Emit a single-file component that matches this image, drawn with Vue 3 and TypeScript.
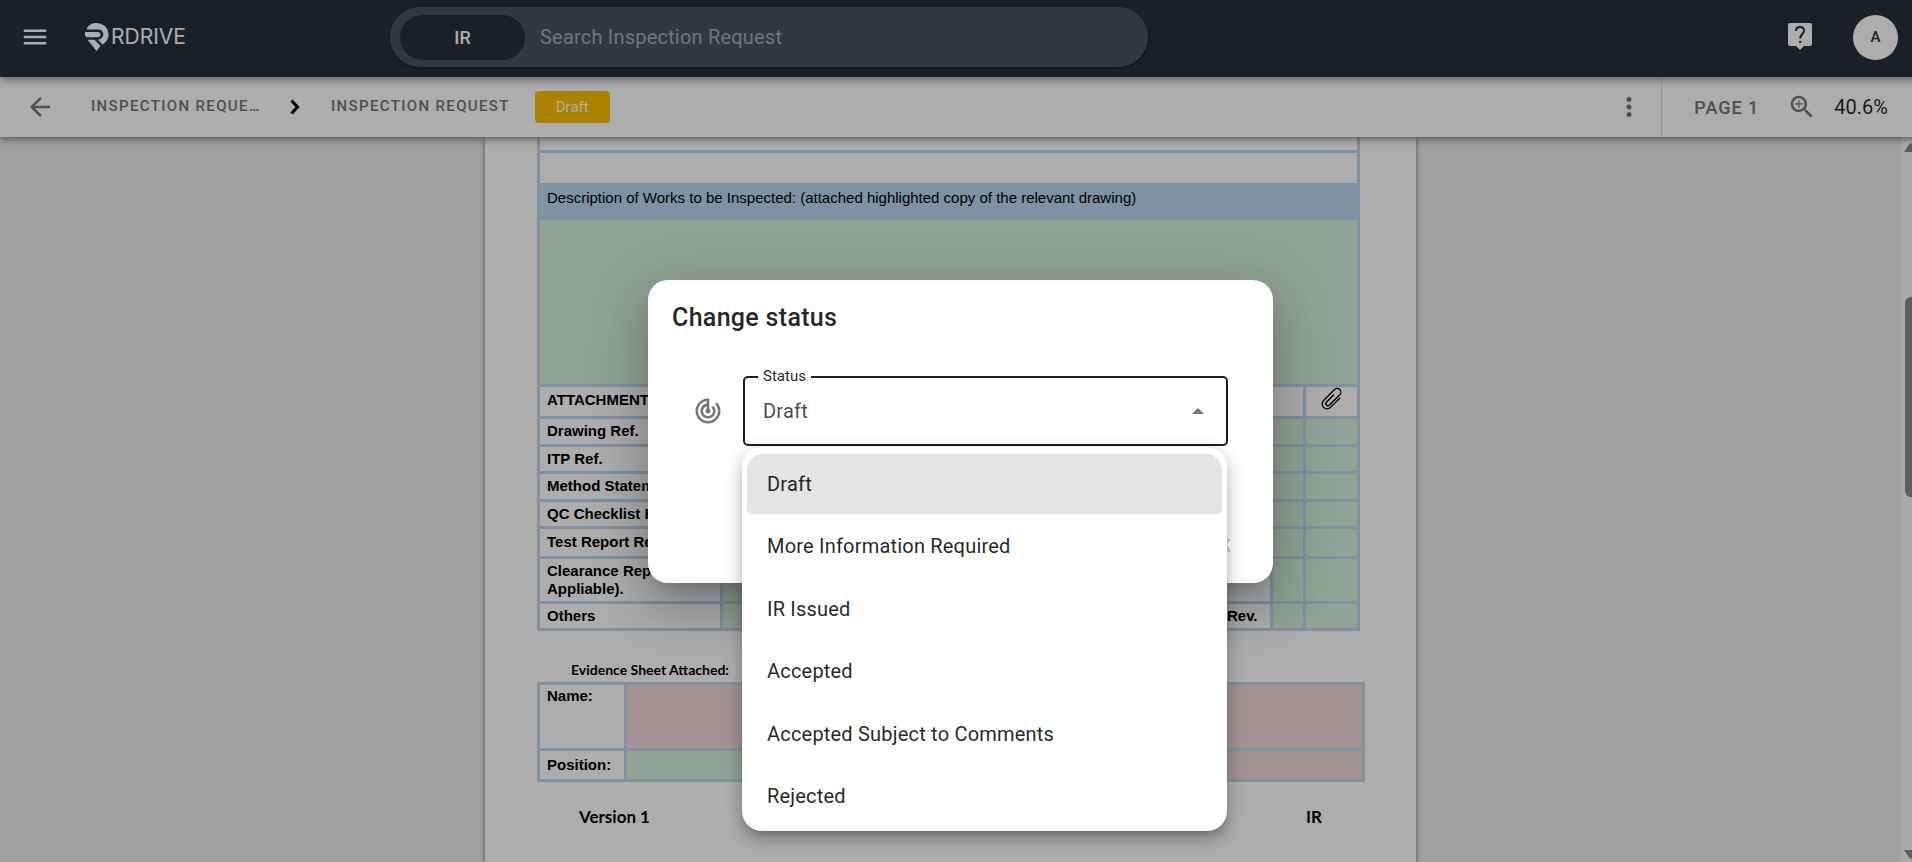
<script setup lang="ts">
import { ref } from 'vue'

const statuses: string[] = [
  'Draft',
  'More Information Required',
  'IR Issued',
  'Accepted',
  'Accepted Subject to Comments',
  'Rejected',
]
const selected = ref<string>('Draft')
const query = ref<string>('')

interface AttachmentRow {
  label: string
  size: string
  rev?: string
}

const attachments: AttachmentRow[] = [
  { label: 'Drawing Ref.', size: 'r28' },
  { label: 'ITP Ref.', size: 'r27' },
  { label: 'Method Statement Ref.', size: 'r28' },
  { label: 'QC Checklist Ref.', size: 'r27' },
  { label: 'Test Report Ref.', size: 'r30' },
  { label: 'Clearance Report (If Appliable).', size: 'r45' },
  { label: 'Others', size: 'r27', rev: 'Rev.' },
]
</script>

<template>
  <div class="frame">
    <div class="app">
      <header class="topbar">
        <div class="brand-area">
          <button class="icon-btn" aria-label="Menu">
            <svg viewBox="0 0 24 24" width="30" height="30"><path fill="#fff" d="M3 18h18v-2H3v2zm0-5h18v-2H3v2zm0-7v2h18V6H3z" /></svg>
          </button>
          <a class="brand" href="#">
            <svg viewBox="0 0 24 28" width="24" height="28" aria-hidden="true">
              <path fill="#fff" d="M1.500 6.500C3 2.500 6.500 0 11 0 18.500 0 23.500 5 23.500 11.500 23.500 16 21 19.500 17.500 21.500L13 16.800C16.500 16 18.300 14 18.300 11.300 18.300 8.300 16 6.500 12.800 6.500Z" />
              <path fill="#fff" d="M0 9H12.500C14.600 9 15.600 10 15.600 11.600S14.600 14.200 12.500 14.200H1.500L0 12.200Z" />
              <path fill="#fff" d="M2.500 16.800H9.500L15.500 23 11.500 28Z" />
            </svg>
            <span>RDRIVE</span>
          </a>
        </div>
        <form class="search" role="search" @submit.prevent>
          <button class="scope" type="button">IR</button>
          <input v-model="query" type="search" aria-label="Search" placeholder="Search Inspection Request" />
        </form>
        <div class="account">
          <button class="icon-btn" aria-label="Help">
            <svg viewBox="0 0 24 28" width="24" height="28">
              <path fill="#fff" d="M2 0H22Q24 0 24 2V21Q24 23 22 23H16L12 27 8 23H2Q0 23 0 21V2Q0 0 2 0Z" />
              <path fill="none" stroke="#263238" stroke-width="2" d="M8 8C8 5.200 9.700 4 12 4S16 5.400 16 7.800C16 11 12.200 11.200 12.200 15.500" />
              <path fill="#263238" d="M11.100 17.800H13.300V20H11.100Z" />
            </svg>
          </button>
          <button class="avatar" aria-label="Account">A</button>
        </div>
      </header>

      <nav class="toolbar" aria-label="Breadcrumb">
        <button class="icon-btn" aria-label="Back">
          <svg viewBox="0 0 24 24" width="30" height="30"><path fill="#757575" d="M20 11H7.830l5.590-5.590L12 4l-8 8 8 8 1.410-1.410L7.830 13H20v-2z" /></svg>
        </button>
        <a class="crumb first" href="#">INSPECTION REQUE…</a>
        <svg class="chevron" viewBox="0 0 10 16" width="10" height="16" aria-hidden="true"><path fill="none" stroke="#000" stroke-width="3" d="M1.500 1.500 7.500 8 1.500 14.500" /></svg>
        <a class="crumb" href="#">INSPECTION REQUEST</a>
        <span class="badge">Draft</span>
        <div class="tools">
          <button class="icon-btn more" aria-label="More">
            <svg viewBox="0 0 24 24" width="30" height="30"><path fill="#757575" d="M12 8c1.100 0 2-.9 2-2s-.9-2-2-2-2 .9-2 2 .9 2 2 2zm0 2c-1.100 0-2 .9-2 2s.9 2 2 2 2-.9 2-2-.9-2-2-2zm0 6c-1.100 0-2 .9-2 2s.9 2 2 2 2-.9 2-2-.9-2-2-2z" /></svg>
          </button>
          <span class="page-no">PAGE 1</span>
          <button class="icon-btn" aria-label="Zoom in">
            <svg viewBox="0 0 24 24" width="30" height="30"><path fill="#757575" d="M15.500 14h-.79l-.28-.27C15.410 12.590 16 11.110 16 9.500 16 5.910 13.090 3 9.500 3S3 5.910 3 9.500 5.910 16 9.500 16c1.610 0 3.090-.59 4.230-1.570l.27.28v.79l5 4.990L20.490 19l-4.990-5zm-6 0C7.010 14 5 11.990 5 9.500S7.010 5 9.500 5 14 7.010 14 9.500 11.990 14 9.500 14zm3-4h-2.500v2.500H9V10H6.500V9H9V6.500h1V9h2.500v1z" /></svg>
          </button>
          <span class="zoom">40.6%</span>
        </div>
      </nav>

      <main class="viewer">
        <div class="canvas">
          <article class="sheet">
            <table class="form works">
              <colgroup><col class="w183" /><col /><col class="w53" /><col class="w33" /><col class="w54" /></colgroup>
              <tbody>
                <tr class="r14"><td colspan="5"></td></tr>
                <tr class="r33"><td colspan="5"></td></tr>
                <tr class="r34"><td class="blue" colspan="5">Description of Works to be Inspected: (attached highlighted copy of the relevant drawing)</td></tr>
                <tr class="r167"><td class="green" colspan="5"></td></tr>
                <tr class="r32">
                  <th class="head" scope="col">ATTACHMENTS</th>
                  <td></td>
                  <td></td>
                  <td></td>
                  <td class="clip">
                    <svg viewBox="-12 -12 24 24" width="24" height="24" role="img" aria-label="Attachment">
                      <path transform="rotate(45)" fill="none" stroke="#000" stroke-width="1.300" stroke-linecap="round" d="M-1.700 -4V6A2.100 2.100 0 0 0 2.500 6V-8.500A3.700 3.700 0 0 0 -4.900 -8.500V7A4.900 4.900 0 0 0 4.900 7V-6" />
                    </svg>
                  </td>
                </tr>
                <tr v-for="row in attachments" :key="row.label" :class="row.size">
                  <th scope="row">{{ row.label }}</th>
                  <td class="green"></td>
                  <th class="rev">{{ row.rev }}</th>
                  <td class="green"></td>
                  <td class="green"></td>
                </tr>
              </tbody>
            </table>

            <p class="evidence">Evidence Sheet Attached:</p>

            <table class="form people">
              <colgroup><col class="w87" /><col /><col class="w338" /></colgroup>
              <tbody>
                <tr class="r66"><th scope="row">Name:</th><td class="red"></td><td class="red"></td></tr>
                <tr class="r31"><th scope="row">Position:</th><td class="green"></td><td class="red"></td></tr>
              </tbody>
            </table>

            <footer class="sheet-foot"><span>Version 1</span><span>IR</span></footer>
          </article>
        </div>
        <div class="scrollbar" aria-hidden="true">
          <svg viewBox="0 0 14 9" width="14" height="9"><path fill="#8b8b8b" d="M0 9 5 1.500Q7-.5 9 1.500L14 9Z" /></svg>
          <span class="thumb"></span>
          <svg viewBox="0 0 14 9" width="14" height="9"><path fill="#8b8b8b" d="M0 0 5 7.500Q7 9.500 9 7.500L14 0Z" /></svg>
        </div>
      </main>

      <div class="overlay">
        <section class="dialog" role="dialog" aria-modal="true" aria-labelledby="dialog-title">
          <h2 id="dialog-title">Change status</h2>
          <div class="dialog-body">
            <svg viewBox="0 0 24 24" width="30" height="30" aria-hidden="true"><path fill="#757575" d="M19.070 4.930l-1.410 1.410C19.100 7.790 20 9.790 20 12c0 4.420-3.580 8-8 8s-8-3.580-8-8c0-4.080 3.050-7.440 7-7.930v2.020C8.160 6.570 6 9.030 6 12c0 3.310 2.690 6 6 6s6-2.690 6-6c0-1.660-.67-3.160-1.760-4.240l-1.410 1.410C15.550 9.900 16 10.900 16 12c0 2.210-1.790 4-4 4s-4-1.790-4-4c0-1.860 1.280-3.410 3-3.860v2.140c-.6.35-1 .98-1 1.720 0 1.100.9 2 2 2s2-.9 2-2c0-.74-.4-1.380-1-1.720V2h-1C6.480 2 2 6.480 2 12s4.480 10 10 10 10-4.480 10-10c0-2.760-1.120-5.260-2.930-7.070z" /></svg>
            <div class="field">
              <label for="status">Status</label>
              <select id="status" v-model="selected">
                <option v-for="s in statuses" :key="s">{{ s }}</option>
              </select>
              <svg class="caret" viewBox="0 0 12 6" width="12" height="6" aria-hidden="true"><path fill="#757575" d="M0 6 6 0 12 6Z" /></svg>
              <div class="menu">
                <ul role="listbox" aria-label="Status">
                  <li
                    v-for="s in statuses"
                    :key="s"
                    role="option"
                    :aria-selected="s === selected"
                    @click="selected = s"
                  >
                    <span :class="{ active: s === selected }">{{ s }}</span>
                  </li>
                </ul>
              </div>
            </div>
          </div>
          <div class="actions"><button disabled>OK</button></div>
        </section>
      </div>
    </div>
  </div>
</template>

<style>
body {
  margin: 0;
}
</style>

<style scoped>
.frame {
  overflow: hidden;
  font-family: Roboto, "Liberation Sans", sans-serif;
  color: rgba(0, 0, 0, 0.87);
}
/* The right edge of the app, with half of the scrollbar, runs past the window. */
.app {
  position: relative;
  display: flex;
  flex-direction: column;
  width: calc(100% + 9px);
  height: 100vh;
  background: #eee;
}
button {
  font: inherit;
  border: 0;
  background: none;
  padding: 0;
  cursor: pointer;
}
a {
  text-decoration: none;
}
svg {
  display: block;
  flex: none;
}
.icon-btn {
  display: block;
}

.topbar {
  position: relative;
  z-index: 2;
  flex: none;
  display: flex;
  align-items: center;
  height: 77px;
  box-sizing: border-box;
  padding: 0 23px 3px 20px;
  background: #263238;
  box-shadow: 0 3px 5px -1px rgba(0, 0, 0, 0.2), 0 5px 6px 0 rgba(0, 0, 0, 0.14), 0 1px 12px 0 rgba(0, 0, 0, 0.12);
}
.brand-area {
  width: 370px;
  flex: none;
  display: flex;
  align-items: center;
  gap: 35px;
}
.brand {
  display: flex;
  align-items: center;
  gap: 2px;
  color: #fff;
  font-family: Inter, Roboto, sans-serif;
  font-size: 21px;
  line-height: 28px;
}
.search {
  flex: 0 1 758px;
  display: flex;
  align-items: center;
  gap: 15px;
  height: 60px;
  box-sizing: border-box;
  padding: 0 30px 0 10px;
  border-radius: 30px;
  background: #4b5358;
  box-shadow: 0 3px 2px -2px rgba(0, 0, 0, 0.2), 0 2px 2px 0 rgba(0, 0, 0, 0.14), 0 1px 5px 0 rgba(0, 0, 0, 0.12);
}
.scope {
  width: 125px;
  height: 45px;
  border-radius: 23px;
  background: #263238;
  color: #fff;
  font-size: 18px;
  font-weight: 500;
}
.search input {
  flex: 1;
  min-width: 0;
  border: 0;
  padding: 0;
  background: none;
  color: #fff;
  font: inherit;
  font-size: 20px;
  letter-spacing: 0.01em;
  outline: none;
}
.search input::placeholder {
  color: #a9adaf;
  opacity: 1;
}
.account {
  margin-left: auto;
  display: flex;
  align-items: center;
  gap: 41px;
}
.avatar {
  width: 45px;
  height: 45px;
  border-radius: 50%;
  background: #fff;
  color: #263238;
  font-size: 15px;
  font-weight: 500;
}

.toolbar {
  position: relative;
  z-index: 1;
  flex: none;
  display: flex;
  align-items: center;
  height: 60px;
  padding: 0 33px 0 25px;
  background: #fff;
  box-shadow: 0 3px 5px -1px rgba(0, 0, 0, 0.2), 0 5px 6px 0 rgba(0, 0, 0, 0.14), 0 1px 12px 0 rgba(0, 0, 0, 0.12);
}
.crumb {
  padding-bottom: 2px;
  color: #757575;
  font-size: 15px;
  font-weight: 500;
  letter-spacing: 0.09em;
  line-height: 20px;
  white-space: nowrap;
}
.crumb.first {
  width: 170px;
  margin-left: 36px;
}
.chevron {
  margin: 0 31px 0 29px;
}
.badge {
  margin-left: 25px;
  padding: 0 21px;
  border-radius: 4px;
  background: #ffc107;
  color: #fff;
  font-size: 15px;
  line-height: 32px;
}
.tools {
  margin-left: auto;
  display: flex;
  align-items: center;
  height: 60px;
}
.more {
  padding: 15px 17px 15px 0;
  border-right: 1px solid #e0e0e0;
}
.page-no {
  margin: 0 28px 0 32px;
  color: #757575;
  font-size: 18px;
  font-weight: 500;
  letter-spacing: 1px;
}
.zoom {
  margin-left: 17px;
  font-size: 20px;
}

.viewer {
  flex: 1;
  min-height: 0;
  display: flex;
}
.canvas {
  flex: 1;
  min-width: 0;
  overflow: hidden;
  display: flex;
  justify-content: center;
}
.sheet {
  width: 931px;
  flex: none;
  box-sizing: border-box;
  padding: 0 52px;
  min-height: 100%;
  background: #fff;
  box-shadow: 0 1px 5px rgba(0, 0, 0, 0.5);
  color: #000;
}
.form {
  table-layout: fixed;
  border-collapse: collapse;
  font-family: "Liberation Sans", Arial, sans-serif;
  font-size: 15px;
  line-height: 18px;
}
.works {
  width: 823px;
}
.people {
  width: 828px;
}
.form td,
.form th {
  box-sizing: border-box;
  padding: 0 7px;
  border: 3px solid #bdd6ee;
  text-align: left;
  vertical-align: middle;
}
.form tr:first-child td[colspan] {
  border-top: 0;
}
.form .blue {
  background: #bdd6ee;
  vertical-align: top;
  padding-top: 3px;
}
.form .green {
  background: #d6f0da;
}
.form .red {
  background: #f1d8d6;
}
.form .head {
  padding-bottom: 3px;
}
.form .clip {
  padding: 0 14px;
  vertical-align: top;
}
.people th {
  vertical-align: top;
  padding-top: 2px;
}
.people tr + tr th {
  vertical-align: middle;
  padding-top: 0;
}
.form .rev {
  white-space: nowrap;
}
.w183 { width: 183px; }
.w53 { width: 53px; }
.w33 { width: 33px; }
.w54 { width: 54px; }
.w87 { width: 87px; }
.w338 { width: 338px; }
.r14 { height: 14px; }
.r33 { height: 33px; }
.r34 { height: 34px; }
.r167 { height: 167px; }
.r27 { height: 27px; }
.r28 { height: 28px; }
.r30 { height: 30px; }
.r31 { height: 31px; }
.r32 { height: 32px; }
.r45 { height: 45px; }
.r66 { height: 66px; }
.evidence {
  margin: 0;
  padding: 29px 0 2px 34px;
  font-family: Lato, sans-serif;
  font-size: 14px;
  font-weight: 700;
  line-height: 20px;
}
.sheet-foot {
  display: flex;
  justify-content: space-between;
  padding: 25px 42px;
  font-family: Lato, sans-serif;
  font-size: 17px;
  font-weight: 700;
  line-height: 20px;
}
.scrollbar {
  width: 20px;
  flex: none;
  box-sizing: border-box;
  padding: 6px 3px 3px;
  display: flex;
  flex-direction: column;
  background: #fbfbfb;
}
.thumb {
  width: 12px;
  height: 200px;
  margin: 145px 1px auto;
  border-radius: 6px;
  background: #8b8b8b;
}

.overlay {
  position: absolute;
  inset: 0;
  z-index: 3;
  display: flex;
  align-items: center;
  justify-content: center;
  background: rgba(0, 0, 0, 0.32);
}
.dialog {
  width: 625px;
  border-radius: 20px;
  background: #fff;
  box-shadow: 0 14px 19px -9px rgba(0, 0, 0, 0.2), 0 30px 48px 4px rgba(0, 0, 0, 0.14), 0 11px 58px 10px rgba(0, 0, 0, 0.12);
}
.dialog h2 {
  margin: 0;
  padding: 20px 24px 0;
  font-size: 25px;
  font-weight: 500;
  letter-spacing: 0.0125em;
  line-height: 36px;
}
.dialog-body {
  display: flex;
  align-items: center;
  gap: 20px;
  padding: 40px 45px 0;
}
.field {
  position: relative;
  flex: 1;
}
.field label {
  position: absolute;
  top: -9px;
  left: 15px;
  padding: 0 5px;
  background: #fff;
  font-size: 15px;
  line-height: 18px;
}
.field select {
  display: block;
  width: 100%;
  height: 70px;
  box-sizing: border-box;
  padding: 0 18px;
  border: 2px solid #1e1e1e;
  border-radius: 5px;
  appearance: none;
  background: #fff;
  color: rgba(0, 0, 0, 0.72);
  font: inherit;
  font-size: 20px;
  letter-spacing: 0.01em;
  outline: none;
}
.caret {
  position: absolute;
  right: 24px;
  top: 32px;
}
.menu {
  position: absolute;
  top: 71px;
  left: -1px;
  width: 100%;
  box-sizing: border-box;
  padding: 7px 5px 2px;
  border-radius: 20px;
  background: #fff;
  box-shadow: 0 6px 6px -4px rgba(0, 0, 0, 0.2), 0 10px 13px 1px rgba(0, 0, 0, 0.14), 0 4px 18px 3px rgba(0, 0, 0, 0.12);
}
.menu ul {
  display: grid;
  grid-auto-rows: 1fr;
  height: 375px;
  margin: 0;
  padding: 0;
  list-style: none;
  font-size: 20px;
  letter-spacing: 0.01em;
}
.menu li span {
  display: block;
  padding: 0 20px;
  border-radius: 5px;
  line-height: 60px;
  cursor: pointer;
}
.menu li:first-child span {
  border-radius: 16px 16px 5px 5px;
}
.menu .active {
  background: #e4e4e4;
}
.actions {
  display: flex;
  justify-content: flex-end;
  padding: 77px 22px 15px;
}
.actions button {
  height: 45px;
  padding: 0 20px;
  color: rgba(0, 0, 0, 0.26);
  font-size: 18px;
  font-weight: 500;
}
</style>
